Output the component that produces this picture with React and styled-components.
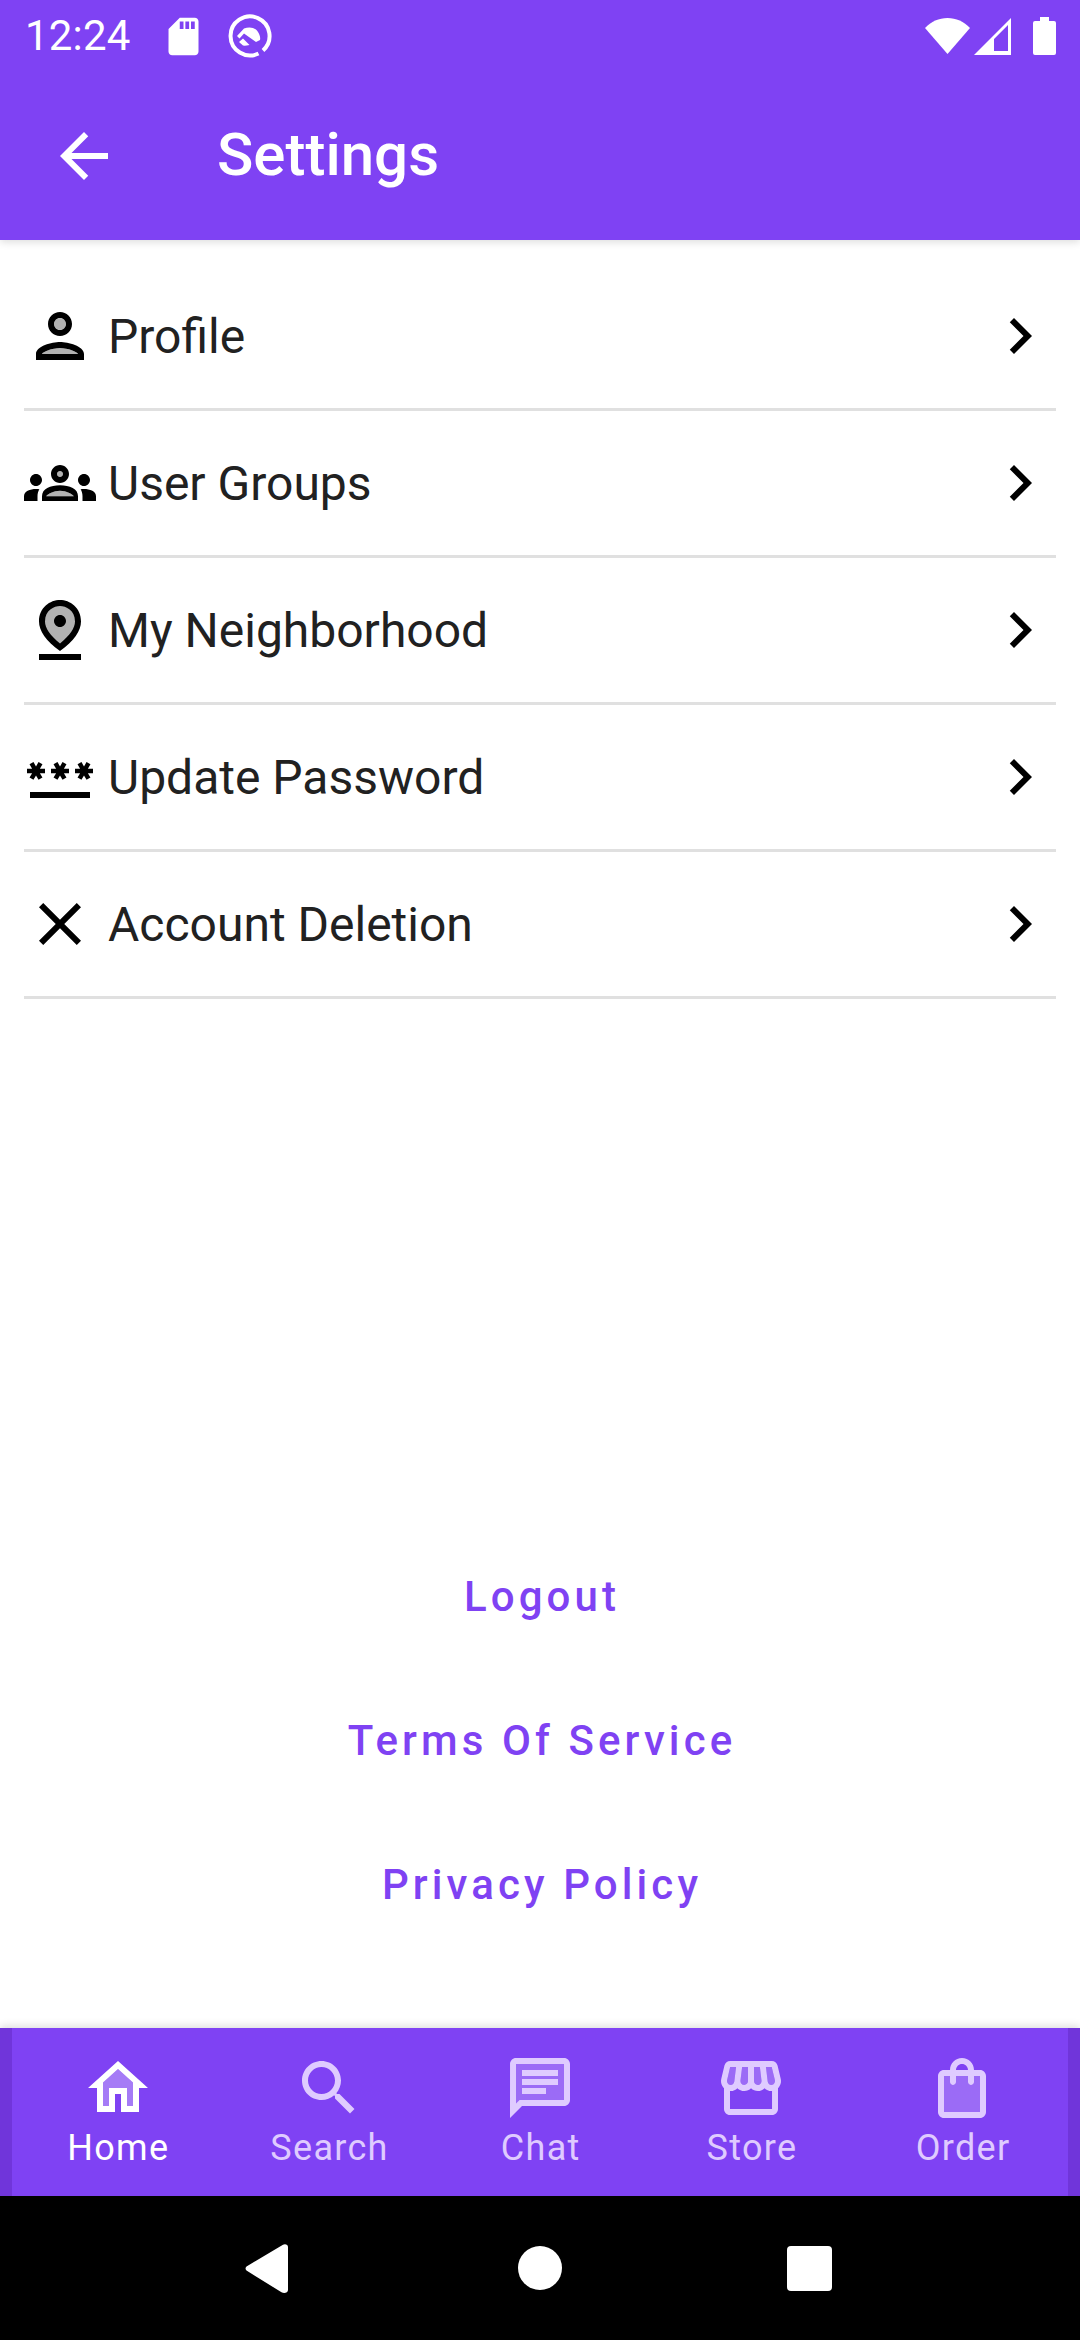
import React from 'react';
import styled, { createGlobalStyle } from 'styled-components';

const Global = createGlobalStyle`
  html, body { margin: 0; padding: 0; background: #fff; }
  * { box-sizing: border-box; }
`;

const PURPLE = '#7f42f3';

const Screen = styled.div`
  width: 1080px;
  height: 2340px;
  display: flex;
  flex-direction: column;
  background: #fff;
  font-family: Roboto, "Liberation Sans", sans-serif;
  overflow: hidden;
`;
const Header = styled.header`
  background: ${PURPLE};
  height: 240px;
  flex: none;
  position: relative;
  z-index: 2;
  box-shadow: 0 2px 8px rgba(0,0,0,.14);
  display: flex;
  flex-direction: column;
`;
const StatusBar = styled.div`
  height: 72px;
  display: flex;
  align-items: center;
  justify-content: space-between;
  padding: 0 24px 0 25px;
  color: #fff;
`;
const StatusGroup = styled.div`
  display: flex;
  align-items: center;
`;
const Clock = styled.span`
  font-size: 42px;
  line-height: 72px;
  width: 136px;
  letter-spacing: 0.2px;
`;
const StatusIcon = styled.svg`
  display: block;
  flex: none;
  margin-left: ${p => p.$ml || 0}px;
`;
const AppBar = styled.div`
  flex: 1;
  display: flex;
  align-items: center;
  padding: 0 0 0 48px;
  color: #fff;
`;
const Title = styled.h1`
  margin: -2px 0 0 97px;
  font-size: 60px;
  font-weight: 500;
  line-height: 72px;
  letter-spacing: 0;
`;
const Main = styled.main`
  flex: 1;
  display: flex;
  flex-direction: column;
  justify-content: space-between;
  background: #fff;
`;
const Menu = styled.div`
  padding: 24px 24px 0;
  display: flex;
  flex-direction: column;
`;
const Row = styled.div`
  height: 147px;
  display: flex;
  align-items: center;
  border-bottom: 3px solid #e0e0e0;
`;
const RowLabel = styled.span`
  flex: 1;
  margin: 2px 0 0 12px;
  font-size: 48px;
  line-height: 72px;
  color: #212121;
`;
const Glyph = styled.svg`
  width: 72px;
  height: 72px;
  display: block;
  flex: none;
  fill: currentColor;
`;
const RowIcon = styled(Glyph)`
  color: #000;
`;
const Links = styled.div`
  display: flex;
  flex-direction: column;
  align-items: center;
  padding-bottom: 72px;
`;
const LinkText = styled.a`
  height: 144px;
  display: flex;
  align-items: center;
  padding-left: 4px;
  font-size: 42px;
  font-weight: 500;
  letter-spacing: 4.1px;
  color: ${PURPLE};
`;
const BottomNav = styled.nav`
  height: 168px;
  flex: none;
  background: ${PURPLE};
  padding: 0 12px;
  display: grid;
  grid-template-columns: repeat(5, 1fr);
  position: relative;
  box-shadow: 0 -2px 8px rgba(0,0,0,.14), inset 12px 0 0 #7035da, inset -12px 0 0 #7035da;
`;
const Tab = styled.div`
  display: flex;
  flex-direction: column;
  align-items: center;
  padding-top: 24px;
  color: ${p => (p.$active ? '#fff' : '#dfcbff')};
`;
const TabLabel = styled.span`
  font-size: 36px;
  line-height: 42px;
  margin-top: 3px;
  padding-left: 1.5px;
  letter-spacing: 1.3px;
`;
const SystemNav = styled.div`
  height: 144px;
  flex: none;
  background: #000;
  display: flex;
  align-items: center;
  justify-content: space-between;
  padding: 0 248px 0 245px;
`;
const HomeDot = styled.div`
  width: 44px;
  height: 44px;
  margin-left: 5px;
  border-radius: 50%;
  background: #fff;
`;
const RecentSquare = styled.div`
  width: 45px;
  height: 45px;
  border-radius: 4px;
  background: #fff;
`;

const rows = [
  { label: 'Profile', icon: (
    <>
      <path opacity=".3" d="M12 10a2 2 0 1 0 0-4 2 2 0 0 0 0 4zM18 18H6c.2-.72 3.300-2 6-2s5.800 1.280 6 2z" />
      <path fillRule="evenodd" d="M12 14c-2.670 0-8 1.340-8 4v2h16v-2c0-2.660-5.330-4-8-4zm6 4H6c.2-.72 3.300-2 6-2s5.800 1.280 6 2zM12 4C9.790 4 8 5.790 8 8s1.790 4 4 4 4-1.790 4-4-1.790-4-4-4zm0 6c-1.100 0-2-.9-2-2s.9-2 2-2 2 .9 2 2-.9 2-2 2z" />
    </>
  ) },
  { label: 'User Groups', icon: (
    <>
      <path opacity=".3" d="M12 8c.55 0 1 .45 1 1s-.45 1-1 1-1-.45-1-1 .45-1 1-1zM7.400 16.400c.5-.7 2.400-1.800 4.600-1.800s4.100 1.100 4.600 1.800H7.400z" />
      <path fillRule="evenodd" d="M4 13c1.100 0 2-.9 2-2s-.9-2-2-2-2 .9-2 2 .9 2 2 2zm1.130 1.100c-.37-.06-.74-.1-1.130-.1-.99 0-1.930.21-2.780.58C.48 14.900 0 15.620 0 16.430V18h4.500v-1.610c0-.83.23-1.610.63-2.290zM20 13c1.100 0 2-.9 2-2s-.9-2-2-2-2 .9-2 2 .9 2 2 2zm4 3.430c0-.81-.48-1.530-1.220-1.850-.85-.37-1.790-.58-2.780-.58-.39 0-.76.04-1.130.1.4.68.63 1.460.63 2.290V18H24v-1.570zM16.240 13.650c-1.170-.52-2.610-.9-4.240-.9-1.630 0-3.070.38-4.240.9C6.680 14.130 6 15.210 6 16.390V18h12v-1.610c0-1.180-.68-2.260-1.760-2.740zM7.400 16.400c.5-.7 2.400-1.800 4.600-1.800s4.100 1.100 4.600 1.800H7.400zM12 12c1.660 0 3-1.340 3-3s-1.340-3-3-3-3 1.340-3 3 1.340 3 3 3zm0-4c.55 0 1 .45 1 1s-.45 1-1 1-1-.45-1-1 .45-1 1-1z" />
    </>
  ) },
  { label: 'My Neighborhood', icon: (
    <>
      <path opacity=".3" d="M12 3C9.190 3 6 5.110 6 9.130c0 2.680 2 5.490 6 8.440 4-2.950 6-5.770 6-8.440C18 5.110 14.810 3 12 3z" />
      <path d="M12 4c1.930 0 5 1.400 5 5.150 0 2.160-1.720 4.670-5 7.320-3.280-2.650-5-5.170-5-7.320C7 5.400 10.070 4 12 4m0-2C8.730 2 5 4.460 5 9.150c0 3.120 2.330 6.410 7 9.850 4.670-3.440 7-6.730 7-9.850C19 4.460 15.270 2 12 2zM12 7c-1.100 0-2 .9-2 2s.9 2 2 2c1.100 0 2-.9 2-2s-.9-2-2-2zM5 20h14v2H5v-2z" />
    </>
  ) },
  { label: 'Update Password', icon: (
    <path d="M2 17h20v2H2v-2zm1.150-4.050L4 11.470l.85 1.480 1.300-.75-.85-1.480H7v-1.500H5.300l.85-1.470L4.850 7 4 8.470 3.150 7l-1.300.75.85 1.470H1v1.500h1.700l-.85 1.480 1.300.75zm6.700-.75 1.300.75.85-1.480.85 1.480 1.300-.75-.85-1.480H15v-1.500h-1.700l.85-1.470-1.300-.75L12 8.470 11.150 7l-1.300.75.85 1.470H9v1.500h1.700l-.85 1.480zM23 9.220h-1.700l.85-1.470-1.300-.75L20 8.470 19.150 7l-1.300.75.85 1.470H17v1.500h1.700l-.85 1.480 1.300.75.85-1.480.85 1.480 1.300-.75-.85-1.480H23v-1.500z" />
  ) },
  { label: 'Account Deletion', icon: (
    <path d="M19 6.410 17.590 5 12 10.590 6.410 5 5 6.410 10.590 12 5 17.590 6.410 19 12 13.410 17.590 19 19 17.590 13.410 12z" />
  ) },
];

const tabs = [
  { label: 'Home', active: true, icon: (
    <>
      <path opacity=".3" d="M7 10.190V18h2v-6h6v6h2v-7.810l-5-4.500z" />
      <path d="M12 3 2 12h3v8h6v-6h2v6h6v-8h3L12 3zm5 15h-2v-6H9v6H7v-7.810l5-4.500 5 4.500V18z" />
    </>
  ) },
  { label: 'Search', icon: (
    <path d="M15.500 14h-.79l-.28-.27C15.410 12.590 16 11.110 16 9.500 16 5.910 13.090 3 9.500 3S3 5.910 3 9.500 5.910 16 9.500 16c1.610 0 3.090-.59 4.230-1.570l.27.28v.79l5 4.990L20.490 19l-4.990-5zm-6 0C7.010 14 5 11.990 5 9.500S7.010 5 9.500 5 14 7.010 14 9.500 11.990 14 9.500 14z" />
  ) },
  { label: 'Chat', icon: (
    <>
      <path opacity=".3" d="M20 4H4v13.170L5.170 16H20V4zm-6 10H6v-2h8v2zm4-3H6V9h12v2zm0-3H6V6h12v2z" />
      <path d="M20 18c1.100 0 2-.9 2-2V4c0-1.100-.9-2-2-2H4c-1.100 0-1.990.9-1.990 2L2 22l4-4h14zm-16-.83V4h16v12H5.170L4 17.170zM6 12h8v2H6zm0-3h12v2H6zm0-3h12v2H6z" />
    </>
  ) },
  { label: 'Store', icon: (
    <>
      <path opacity=".3" d="M6.440 9.860 7.020 5H5.050L4.040 9.360c-.1.42-.01.84.25 1.170.14.18.44.47.94.47.61 0 1.140-.49 1.210-1.140zM9.710 11c.74 0 1.290-.59 1.290-1.310V5H9.040l-.55 4.520c-.05.39.07.78.33 1.070.23.26.55.41.89.41zM14.220 11c.41 0 .73-.15.95-.41.26-.29.38-.68.33-1.070L14.960 5H13v4.690c0 .72.55 1.310 1.220 1.310zM18.910 4.990 16.980 5l.58 4.860c.07.65.6 1.140 1.210 1.140.5 0 .8-.29.94-.47.26-.33.35-.75.25-1.170l-1.050-4.370z" />
      <path d="m21.900 8.890-1.050-4.370c-.22-.9-1-1.520-1.910-1.520H5.050c-.9 0-1.690.63-1.900 1.520L2.100 8.890c-.24 1.020-.02 2.060.62 2.880.08.11.19.19.28.29V19c0 1.100.9 2 2 2h14c1.100 0 2-.9 2-2v-6.940c.09-.09.2-.18.28-.28.64-.82.87-1.870.62-2.890zm-2.990-3.900 1.050 4.370c.1.42.01.84-.25 1.170-.14.18-.44.47-.94.47-.61 0-1.140-.49-1.210-1.140L16.980 5l1.930-.01zM13 5h1.960l.54 4.520c.05.39-.07.78-.33 1.070-.22.26-.54.41-.95.41-.67 0-1.220-.59-1.220-1.310V5zM8.490 9.520 9.040 5H11v4.690c0 .72-.55 1.310-1.290 1.310-.34 0-.65-.15-.89-.41-.25-.29-.37-.68-.33-1.070zm-4.450-.16L5.050 5h1.970l-.58 4.860c-.08.65-.6 1.140-1.210 1.140-.49 0-.8-.29-.93-.47-.27-.32-.36-.75-.26-1.170zM5 19v-6.030c.08.01.15.03.23.03.87 0 1.660-.36 2.240-.95.6.6 1.400.95 2.310.95.87 0 1.650-.36 2.230-.93.59.57 1.390.93 2.290.93.84 0 1.640-.35 2.240-.95.58.59 1.370.95 2.240.95.08 0 .15-.02.23-.03V19H5z" />
    </>
  ) },
  { label: 'Order', icon: (
    <>
      <path opacity=".3" d="M6 20h12V8h-2v2c0 .55-.45 1-1 1s-1-.45-1-1V8h-4v2c0 .55-.45 1-1 1s-1-.45-1-1V8H6v12z" />
      <path d="M18 6h-2c0-2.210-1.790-4-4-4S8 3.790 8 6H6c-1.100 0-2 .9-2 2v12c0 1.100.9 2 2 2h12c1.100 0 2-.9 2-2V8c0-1.100-.9-2-2-2zm-6-2c1.100 0 2 .9 2 2h-4c0-1.100.9-2 2-2zm6 16H6V8h2v2c0 .55.45 1 1 1s1-.45 1-1V8h4v2c0 .55.45 1 1 1s1-.45 1-1V8h2v12z" />
    </>
  ) },
];

export default function App() {
  return (
    <Screen>
      <Global />
      <Header>
        <StatusBar>
          <StatusGroup>
            <Clock>12:24</Clock>
            <StatusIcon width="45" height="45" viewBox="0 0 24 24" fill="#fff">
              <path d="M18 2h-8L4.020 8 4 20c0 1.100.9 2 2 2h12c1.100 0 2-.9 2-2V4c0-1.100-.9-2-2-2zm-6 6h-2V4h2v4zm3 0h-2V4h2v4zm3 0h-2V4h2v4z" />
            </StatusIcon>
            <StatusIcon $ml={22} width="44" height="44" viewBox="0 0 44 44" fill="none">
              <path d="M30.500 39.500A19.500 19.500 0 1 1 35 36.500" stroke="#fff" strokeWidth="4" />
              <path fill="#fff" d="M16 14.500C21 12.500 27 13 30 18c2 3 2.500 6 2 8l-4 2-12-8.500-4.500 5L9 22z" />
              <path fill="#fff" d="M11 28l4-3.500 6.500 6.500q-4.500 1-6.500.5z" />
            </StatusIcon>
          </StatusGroup>
          <StatusGroup>
            <StatusIcon width="45" height="36" viewBox="0 0 45 36" fill="#fff">
              <path d="M22.500 36 0 10C6 3.500 14 0 22.500 0S39 3.500 45 10z" />
            </StatusIcon>
            <StatusIcon $ml={4} width="37" height="37" viewBox="0 0 37 37" fill="#fff">
              <path fillRule="evenodd" d="M0 37 37 0v37zM20 33h14V7L20 21z" />
            </StatusIcon>
            <StatusIcon $ml={22} width="23" height="38" viewBox="0 0 23 38" fill="#fff">
              <path d="M7 0h9v4h5a2 2 0 0 1 2 2v30a2 2 0 0 1-2 2H2a2 2 0 0 1-2-2V6a2 2 0 0 1 2-2h5z" />
            </StatusIcon>
          </StatusGroup>
        </StatusBar>
        <AppBar>
          <Glyph viewBox="0 0 24 24">
            <path d="M20 11H7.830l5.590-5.590L12 4l-8 8 8 8 1.410-1.410L7.830 13H20v-2z" />
          </Glyph>
          <Title>Settings</Title>
        </AppBar>
      </Header>
      <Main>
        <Menu>
          {rows.map(r => (
            <Row key={r.label}>
              <RowIcon viewBox="0 0 24 24">{r.icon}</RowIcon>
              <RowLabel>{r.label}</RowLabel>
              <RowIcon viewBox="0 0 24 24">
                <path d="M10 6 8.590 7.410 13.170 12l-4.580 4.590L10 18l6-6z" />
              </RowIcon>
            </Row>
          ))}
        </Menu>
        <Links>
          <LinkText>Logout</LinkText>
          <LinkText>Terms Of Service</LinkText>
          <LinkText>Privacy Policy</LinkText>
        </Links>
      </Main>
      <BottomNav>
        {tabs.map(t => (
          <Tab key={t.label} $active={t.active}>
            <Glyph viewBox="0 0 24 24">{t.icon}</Glyph>
            <TabLabel>{t.label}</TabLabel>
          </Tab>
        ))}
      </BottomNav>
      <SystemNav>
        <svg width="43" height="49" viewBox="0 0 43 49" fill="#fff">
          <path d="M38 .8 1.500 22.500C.2 23.700.2 25.300 1.500 26.500L36.500 48.300C39 49.500 43 49 43 46V3C43 .5 40-.5 38 .8z" />
        </svg>
        <HomeDot />
        <RecentSquare />
      </SystemNav>
    </Screen>
  );
}
